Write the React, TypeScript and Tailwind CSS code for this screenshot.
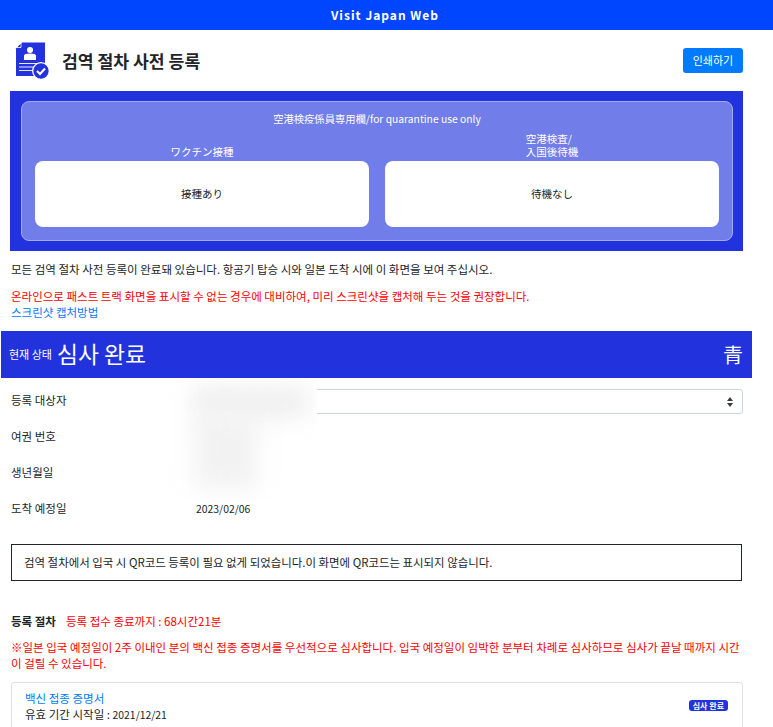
const font = { fontFamily: '"Noto Sans CJK KR", "Noto Sans", sans-serif' };

const DocIcon = () => (
  <svg width="36" height="38" viewBox="0 0 36 38" className="shrink-0">
    <path d="M7 0.500H30V34H1V6.500Z" fill="#2233dd" />
    <path d="M1.500 5.500H6V1Z" fill="#2233dd" stroke="#fff" strokeWidth="0.800" />
    <circle cx="15" cy="8" r="3" fill="#fff" />
    <path d="M9 18v-4.500c0-1.300 2-2 6-2s6 .700 6 2V18Z" fill="#fff" />
    <path d="M4 21.500H25M4 25H19M4 28.500H18" stroke="#fff" strokeWidth="0.900" />
    <circle cx="26" cy="29" r="8.300" fill="#2233dd" stroke="#fff" strokeWidth="1.300" />
    <path d="M22 29l3 3 5-5.500" fill="none" stroke="#fff" strokeWidth="2" />
  </svg>
);

const QuarantineCol = ({ label, value }: { label: React.ReactNode; value: string }) => (
  <div className="flex-1 flex flex-col">
    <div className="flex-1 flex flex-col justify-end items-center text-[10.500px] leading-[13px] text-white pb-[3px]">
      <div>{label}</div>
    </div>
    <div className="h-[66px] bg-white rounded-lg flex items-center justify-center text-[10.500px] text-[#212529]">
      {value}
    </div>
  </div>
);

const InfoRow = ({ label, value, height }: { label: string; value?: string; height: string }) => (
  <div className={`flex items-center ${height} text-[11.500px] text-[#212529]`}>
    <div className="w-[185px]">{label}</div>
    <div className="text-[10.400px]">{value}</div>
  </div>
);

export default function App() {
  return (
    <div style={font} className="relative w-[773px] h-[727px] overflow-hidden bg-white text-[#212529]">
      <div className="h-[30px] bg-[#0045ff] flex items-center justify-center text-white text-[12px] font-bold tracking-[1px] pr-[3px]">
        Visit Japan Web
      </div>

      <div className="h-[61px] pl-[15px] pr-[30px] flex items-center justify-between">
        <div className="flex items-center gap-[11px]">
          <DocIcon />
          <span className="text-[17.200px] font-bold text-[#212529]">검역 절차 사전 등록</span>
        </div>
        <div className="w-[60px] h-[25px] rounded-[3px] bg-[#007bff] text-white text-[11px] flex items-center justify-center">
          인쇄하기
        </div>
      </div>

      <div className="ml-[10px] w-[733px] h-[160px] bg-[#2233dd] pt-[10px] pl-[11px] pr-[10px]">
        <div className="h-[140px] rounded-lg border border-[#a2abf0] bg-[#717de8] px-[13px] pt-[9px] pb-[13px] flex flex-col">
          <div className="text-center text-[10.300px] leading-[16px] text-white">空港検疫係員専用欄/for quarantine use only</div>
          <div className="flex-1 flex gap-4">
            <QuarantineCol label="ワクチン接種" value="接種あり" />
            <QuarantineCol
              label={
                <>
                  空港検査/
                  <br />
                  入国後待機
                </>
              }
              value="待機なし"
            />
          </div>
        </div>
      </div>

      <div className="pl-[11px] pt-[10px] text-[11.500px] leading-[16px]">
        모든 검역 절차 사전 등록이 완료돼 있습니다. 항공기 탑승 시와 일본 도착 시에 이 화면을 보여 주십시오.
      </div>
      <div className="pl-[11px] pt-[11px] text-[11.500px] leading-[16px] text-[#ff0000]">
        온라인으로 패스트 트랙 화면을 표시할 수 없는 경우에 대비하여, 미리 스크린샷을 캡처해 두는 것을 권장합니다.
      </div>
      <div className="pl-[11px] text-[11.500px] leading-[16px] text-[#007bff]">스크린샷 캡처방법</div>

      <div className="mt-[11px] ml-px w-[751px] h-[47px] bg-[#2233dd] text-white flex items-center justify-between pl-[8px] pr-[9px]">
        <div className="flex items-center gap-[5px]">
          <span className="text-[11px]">현재 상태</span>
          <span className="text-[22.800px]">심사 완료</span>
        </div>
        <span className="text-[20px]">青</span>
      </div>

      <div className="pl-[11px] pr-[30px] pt-[11px]">
        <div className="flex items-center h-[25px] text-[11.500px]">
          <div className="w-[174px] pb-[2px]">등록 대상자</div>
          <div className="flex-1 h-[25px] border border-[#ced4da] rounded-[3px] flex items-center justify-end pr-[9px]">
            <svg width="6" height="10" viewBox="0 0 6 10">
              <path d="M3 0L6 4H0ZM3 10L0 6H6Z" fill="#343a40" />
            </svg>
          </div>
        </div>
        <InfoRow label="여권 번호" height="h-[36px] mt-[5px]" />
        <InfoRow label="생년월일" height="h-[36px]" />
        <InfoRow label="도착 예정일" value="2023/02/06" height="h-[36px]" />
      </div>

      <div className="mt-[17px] ml-[11px] w-[731px] h-[37px] border border-[#212529] flex items-center pl-[12px] text-[11.450px]">
        검역 절차에서 입국 시 QR코드 등록이 필요 없게 되었습니다.이 화면에 QR코드는 표시되지 않습니다.
      </div>

      <div className="mt-[32px] pl-[11px] flex items-center gap-[10px] text-[11.500px] leading-[16px]">
        <span className="font-bold">등록 절차</span>
        <span className="text-[#ff0000]">등록 접수 종료까지 : 68시간21분</span>
      </div>
      <div className="mt-[10px] pl-[11px] pr-[30px] text-[11.500px] leading-[16px] text-[#ff0000]">
        ※일본 입국 예정일이 2주 이내인 분의 백신 접종 증명서를 우선적으로 심사합니다. 입국 예정일이 임박한 분부터 차례로 심사하므로 심사가 끝날 때까지 시간이 걸릴 수 있습니다.
      </div>

      <div className="mt-[11px] ml-[11px] w-[732px] h-[80px] border border-[#dfdfdf] rounded-[3px] pl-[13px] pr-[14px] pt-[7px] flex justify-between">
        <div className="text-[11.500px] leading-[16px]">
          <div className="text-[#007bff]">백신 접종 증명서</div>
          <div>
            유효 기간 시작일 : <span className="text-[10.400px]">2021/12/21</span>
          </div>
        </div>
        <div className="mt-[10px] h-[11px] px-[4px] rounded-[3px] bg-[#2233dd] text-white text-[8px] font-bold leading-[11px]">심사 완료</div>
      </div>

      {/* personal data blurred out in the screenshot */}
      <div className="absolute left-[165px] top-[378px] w-[152px] h-[123px] bg-white overflow-hidden">
        <div className="absolute left-[28px] top-[8px] w-[115px] h-[32px] bg-[#efefef] blur-[12px]" />
        <div className="absolute left-[30px] top-[33px] w-[62px] h-[78px] bg-[#f2f2f2] blur-[12px]" />
      </div>
    </div>
  );
}
